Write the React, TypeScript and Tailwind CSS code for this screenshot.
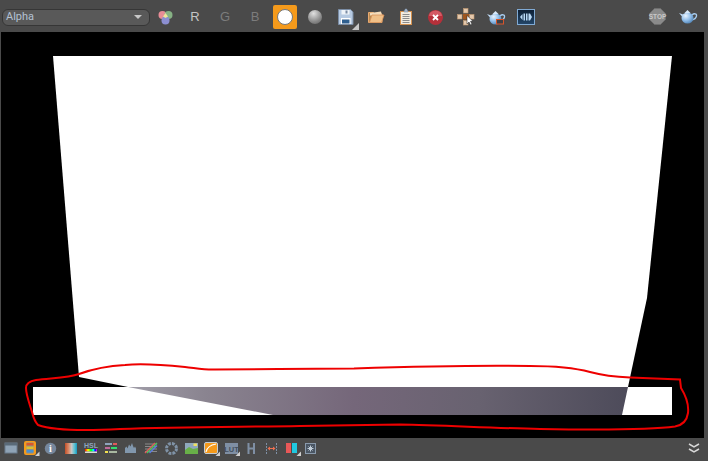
import React from 'react';

// top bar cells are 30x26, coordinates inside each svg are cell-relative
const TopIcon: React.FC<{ children: React.ReactNode }> = ({ children }) => (
  <svg width="30" height="26" viewBox="0 0 30 26" className="block shrink-0">{children}</svg>
);

// bottom bar cells are 20x20
const Cell: React.FC<{ children: React.ReactNode }> = ({ children }) => (
  <svg width="20" height="20" viewBox="0 0 20 20" className="block shrink-0">{children}</svg>
);

const Letter: React.FC<{ children: React.ReactNode; on?: boolean }> = ({ children, on }) => (
  <div className={`w-[30px] h-[26px] flex items-center justify-center shrink-0 text-[13px] [font-family:'Liberation_Sans',sans-serif] ${on ? 'text-[#c4c4c4]' : 'text-[#7c7c7c]'}`}>
    {children}
  </div>
);

const Teapot = ({ id, x, y, sub }: { id: string; x: number; y: number; sub?: boolean }) => (
  <g transform={`translate(${x} ${y})`}>
    <defs>
      <radialGradient id={id} cx="0.35" cy="0.3" r="0.85">
        <stop offset="0" stopColor="#eaf4ff" />
        <stop offset="0.5" stopColor="#8fbce8" />
        <stop offset="1" stopColor="#3f74a8" />
      </radialGradient>
    </defs>
    <path d="M13 5c2-2 5-1.500 4.500 1s-2.500 3.500-5 4" fill="none" stroke="#a8cdf0" strokeWidth="1.300" />
    <path d="M0 3l4 1.500 1 3.500-2-1.500z" fill="#c0dcf6" />
    <ellipse cx="8.500" cy="8" rx="6" ry="5.500" fill={`url(#${id})`} />
    <path d="M5.500 3h6L8.500 0z" fill="#d6e8fa" />
    {sub && <rect x="9.500" y="8.500" width="7" height="4.500" fill="#3c4046" stroke="#d8552a" />}
  </g>
);

const TopBar = () => (
  <div className="h-[32px] flex items-center pt-[2px] pl-[2px] pr-[5px] bg-[#4a4a4a] shrink-0">
    <div className="w-[148px] h-[17px] flex items-center justify-between pl-[3px] pr-[7px] rounded-[6px] bg-[#595959] border border-[#363636] shrink-0">
      <span className="text-[11px] text-[#b4c2d4] [font-family:Roboto,sans-serif]">Alpha</span>
      <span className="w-0 h-0 border-l-[4px] border-r-[4px] border-t-[4px] border-l-transparent border-r-transparent border-t-[#c8c8c8]" />
    </div>
    <TopIcon>
      <circle cx="12.500" cy="11" r="4" fill="#e88c96" />
      <circle cx="18.500" cy="11" r="4" fill="#86b284" />
      <circle cx="15.500" cy="16.500" r="4" fill="#8c8fd2" />
      <path d="M15.500 9l2.500 3.500-2.500 1.500-2.500-1.500z" fill="#eee49a" />
    </TopIcon>
    <Letter on>R</Letter>
    <Letter>G</Letter>
    <Letter>B</Letter>
    <div className="w-[30px] h-[26px] flex items-center justify-center shrink-0">
      <div className="w-[24px] h-[24px] rounded-[2px] bg-[#f59a1b] flex items-center justify-center">
        <div className="w-[16px] h-[16px] rounded-full bg-white border border-[#777]" />
      </div>
    </div>
    <div className="w-[30px] h-[26px] flex items-center justify-center shrink-0">
      <div className="w-[14px] h-[14px] rounded-full bg-[radial-gradient(circle_at_40%_25%,#e0e0e0,#8a8a8a_60%,#5c5c5c)]" />
    </div>
    <TopIcon>
      <path d="M8.500 5.500h12l2.500 2.500v12.500H8.500z" fill="#b6cae2" stroke="#7a8ca4" />
      <rect x="11.500" y="6" width="8" height="4.500" fill="#eef3f8" />
      <rect x="15.500" y="6.500" width="2" height="3" fill="#7a8ca4" />
      <rect x="11" y="14" width="9.500" height="6" fill="#fff" />
      <rect x="12" y="15.500" width="7.500" height="4" fill="#2f5f8f" />
      <path d="M29 19v7h-7z" fill="#c8c8c8" />
    </TopIcon>
    <TopIcon>
      <path d="M8.500 8.500h5l1 1.500h7.500v8.500h-13.500z" fill="#b98a52" stroke="#e8aa70" />
      <path d="M10 9l11-1.500 1 4H10z" fill="#f4dcba" />
      <path d="M9.500 18.500h12l2.500-7.500H12z" fill="#f0c088" stroke="#d8935a" strokeWidth="0.800" />
    </TopIcon>
    <TopIcon>
      <rect x="10.500" y="7.500" width="11" height="13" fill="#f3ece0" stroke="#d2904f" />
      <path d="M14 8V6.500h1V5h2v1.500h1V8z" fill="#a8b8cc" stroke="#7a8ca4" strokeWidth="0.500" />
      <path d="M12.500 10.500h7M12.500 12.500h7M12.500 14.500h7M12.500 16.500h7M12.500 18.500h7" stroke="#8c8c8c" />
    </TopIcon>
    <TopIcon>
      <circle cx="15.500" cy="13.500" r="7.500" fill="#b5303a" />
      <path d="M9 12a6.500 5.500 0 0 1 13 0z" fill="#d45a64" />
      <path d="M13 11l5 5M18 11l-5 5" stroke="#fff" strokeWidth="1.800" />
    </TopIcon>
    <TopIcon>
      <g fill="#e4c8ac" stroke="#c09870" strokeWidth="0.600">
        <rect x="13.500" y="4.500" width="4.500" height="4.500" />
        <rect x="7.500" y="10.500" width="4.500" height="4.500" />
        <rect x="19.500" y="10.500" width="4.500" height="4.500" />
        <rect x="13.500" y="16.500" width="4.500" height="4.500" />
      </g>
      <rect x="13" y="10" width="6" height="5.500" fill="#a0561e" />
      <path d="M17 11.500v8.500l2-2 1.500 3 1.500-.7-1.500-3h2.500z" fill="#fff" stroke="#222" strokeWidth="0.500" />
    </TopIcon>
    <TopIcon>
      <Teapot id="potA" x={7} y={7} sub />
    </TopIcon>
    <TopIcon>
      <defs>
        <linearGradient id="filmBg" x1="0" y1="0" x2="0" y2="1">
          <stop offset="0" stopColor="#0d1f34" />
          <stop offset="1" stopColor="#24476a" />
        </linearGradient>
      </defs>
      <rect x="7.500" y="5.500" width="17" height="15" fill="url(#filmBg)" stroke="#80aad4" />
      <path d="M10 13l2.500-3v6zM13.500 9.500h1.500v7h-1.500zM16 9.500h1.500v7H16zM18.500 9.500H20l2 3.500-2 3.500h-1.500z" fill="#b8d8f4" />
    </TopIcon>
    <div className="ml-auto flex">
      <TopIcon>
        <path d="M11.500 4.500h6l5 5v6l-5 5h-6l-5-5v-6z" fill="#8a8a8a" stroke="#6e6e6e" />
        <text x="14.500" y="14.800" textAnchor="middle" fontSize="6.500" fontWeight="700" fill="#c8c8c8" fontFamily="Liberation Sans">STOP</text>
      </TopIcon>
      <TopIcon>
        <Teapot id="potB" x={6} y={6} />
      </TopIcon>
    </div>
  </div>
);

const Canvas = () => (
  <div className="flex-1 ml-[1px] mr-[4px] bg-black min-h-0">
    <svg width="703" height="406" viewBox="1 32 703 406" className="block">
      <defs>
        <linearGradient id="strip" gradientUnits="userSpaceOnUse" x1="130" y1="387" x2="628" y2="415">
          <stop offset="0" stopColor="#a09da8" />
          <stop offset="0.15" stopColor="#8a8490" />
          <stop offset="0.45" stopColor="#75677a" />
          <stop offset="0.7" stopColor="#686270" />
          <stop offset="1" stopColor="#4d4b5a" />
        </linearGradient>
      </defs>
      <path d="M53 56H672L647 298 628 387H128L79 377Z" fill="#fff" />
      <rect x="33" y="387" width="639" height="28" fill="#fff" />
      <path d="M128 387H628L622 415H273Z" fill="url(#strip)" />
      <path
        d="M79 374C90 370 105 366 125 365C145 363 165 365 185 367C195 368 205 370 215 369.500C260 369 310 369 354 368.500C400 367 470 365 530 366C560 366 575 368 590 372C605 376 618 377 630 377.500L680 379.500L681 388C686 396 689 404 688 413C687 420 684 425 675 426.500C650 430 600 430 540 429C490 428 440 425 400 424.500L300 426C240 427 180 427 120 429C85 431 55 431 38 425C34 421 33 416 32 412C30 405 26 395 26 388C26 383 30 381 36 380C50 378 68 378 79 374Z"
        fill="none"
        stroke="#ee0000"
        strokeWidth="2"
      />
    </svg>
  </div>
);

const Corner = () => <path d="M18.500 13.500v4.500h-4.500z" fill="#d0d0d0" />;

const BottomBar = () => (
  <div className="h-[23px] flex items-center pb-[3px] pl-[1px] pr-[8px] bg-[#4a4a4a] shrink-0">
    <Cell>
      <rect x="4" y="5" width="12" height="10" fill="#8fa3b6" stroke="#6b7d8e" />
      <rect x="4" y="5" width="12" height="2.500" fill="#5a6a78" />
    </Cell>
    <Cell>
      <rect x="3" y="3" width="12" height="14" rx="2" fill="#f59a1b" />
      <rect x="5.500" y="4.500" width="7" height="11" fill="#8a8f8c" />
      <rect x="5.500" y="5" width="7" height="2.500" fill="#d9562a" />
      <rect x="5.500" y="8.500" width="7" height="2.500" fill="#d8c030" />
      <rect x="5.500" y="12" width="7" height="2.500" fill="#4a90d0" />
      <Corner />
    </Cell>
    <Cell>
      <circle cx="9.500" cy="10.500" r="5.700" fill="#76879c" />
      <text x="9.500" y="14" textAnchor="middle" fontSize="10" fontWeight="700" fill="#fff" fontFamily="Liberation Serif">i</text>
    </Cell>
    <Cell>
      <defs>
        <linearGradient id="ramp" x1="0" y1="0" x2="1" y2="0">
          <stop offset="0" stopColor="#c0502a" />
          <stop offset="0.3" stopColor="#d88a68" />
          <stop offset="0.55" stopColor="#c8c8c8" />
          <stop offset="0.8" stopColor="#58c0d0" />
          <stop offset="1" stopColor="#1898c0" />
        </linearGradient>
      </defs>
      <rect x="4" y="5" width="12" height="11" fill="url(#ramp)" />
    </Cell>
    <Cell>
      <text x="10" y="10" textAnchor="middle" fontSize="7" fontWeight="700" fill="#8ea4bc" fontFamily="Liberation Sans">HSL</text>
      <defs>
        <linearGradient id="hue" x1="0" y1="0" x2="1" y2="0">
          <stop offset="0" stopColor="#f00" />
          <stop offset="0.25" stopColor="#ff0" />
          <stop offset="0.5" stopColor="#0f0" />
          <stop offset="0.7" stopColor="#0ff" />
          <stop offset="0.85" stopColor="#00f" />
          <stop offset="1" stopColor="#f0f" />
        </linearGradient>
      </defs>
      <rect x="4" y="11" width="12" height="2.500" fill="url(#hue)" />
      <rect x="4" y="13.500" width="12" height="1.500" fill="#d8d8d8" />
    </Cell>
    <Cell>
      <path d="M4 6h7" stroke="#8ea4bc" strokeWidth="2" />
      <path d="M12 6h4" stroke="#e05a5a" strokeWidth="2" />
      <path d="M4 10h5" stroke="#c06a9a" strokeWidth="2" />
      <path d="M10 10h6" stroke="#30e070" strokeWidth="2" />
      <path d="M4 14h3" stroke="#f0e050" strokeWidth="2" />
      <path d="M8 14h8" stroke="#a8b8a0" strokeWidth="2" />
    </Cell>
    <Cell>
      <path d="M4 15v-5l1.500-1.500 1 2 1.500-4 1.500 2 1.500-3.500 1 3 1 2 1-1.500 1 2V15z" fill="#8197ad" />
    </Cell>
    <Cell>
      <path d="M4 6h12M4 8.500h12M4 11h12M4 13.500h12" stroke="#8a8a8a" />
      <path d="M4 15L14 5" stroke="#e05a5a" strokeWidth="1.400" />
      <path d="M6 15L16 5" stroke="#4ac060" strokeWidth="1.400" />
      <path d="M8.500 15L16 7.500" stroke="#5a7ae0" strokeWidth="1.400" />
    </Cell>
    <Cell>
      <circle cx="10.500" cy="10.500" r="5" fill="none" stroke="#7f92a6" strokeWidth="3" strokeDasharray="2.800 1.100" />
    </Cell>
    <Cell>
      <rect x="4" y="5" width="13" height="11" fill="#8fa8bc" />
      <path d="M4 12l4-3 4 2 5-1v6H4z" fill="#68b048" />
      <rect x="12.500" y="5.500" width="3.500" height="2.500" fill="#f0e060" />
    </Cell>
    <Cell>
      <rect x="3.500" y="4.500" width="13" height="11" rx="1.500" fill="#f59a1b" stroke="#c4ccd4" />
      <path d="M5 14C6 9 9 7 15 6" fill="none" stroke="#fff" strokeWidth="1.200" />
      <path d="M19 13.500v4.500h-4.500z" fill="#d0d0d0" />
    </Cell>
    <Cell>
      <rect x="4" y="5" width="13" height="11" fill="#7f8fa4" />
      <text x="10.500" y="13.500" textAnchor="middle" fontSize="7.500" fontWeight="700" fill="#44505e" fontFamily="Liberation Sans">LUT</text>
      <path d="M19 13.500v4.500h-4.500z" fill="#d0d0d0" />
    </Cell>
    <Cell>
      <path d="M7.500 5v11M13 5v11M7.500 10.500H13" fill="none" stroke="#7f8fa4" strokeWidth="2" />
    </Cell>
    <Cell>
      <path d="M5.500 5v11M15.500 5v11" stroke="#7f8fa4" strokeDasharray="2 1" />
      <path d="M7 10.500h7" stroke="#f07050" />
      <path d="M6.500 10.500l2.500-2v4zM14.500 10.500l-2.500-2v4z" fill="#f07050" />
    </Cell>
    <Cell>
      <rect x="5" y="5" width="5" height="10" fill="#e85858" />
      <rect x="11" y="5" width="5" height="10" fill="#20c8e0" />
      <path d="M20 13.500v4.500h-4.500z" fill="#d0d0d0" />
    </Cell>
    <Cell>
      <rect x="4.500" y="5.500" width="10" height="10" fill="#4a5664" stroke="#8a9aac" />
      <path d="M9.500 7.500v6M6.500 10.500h6M7.500 8.500l4 4M11.500 8.500l-4 4" stroke="#c0ccd8" />
    </Cell>
    <svg width="12" height="11" viewBox="0 0 12 11" className="block ml-auto">
      <path d="M1 1l5 3 5-3M1 6l5 3 5-3" fill="none" stroke="#d8d8d8" strokeWidth="1.500" />
    </svg>
  </div>
);

export default function App() {
  return (
    <div className="w-[708px] h-[461px] flex flex-col bg-[#4a4a4a] overflow-hidden">
      <TopBar />
      <Canvas />
      <BottomBar />
    </div>
  );
}
